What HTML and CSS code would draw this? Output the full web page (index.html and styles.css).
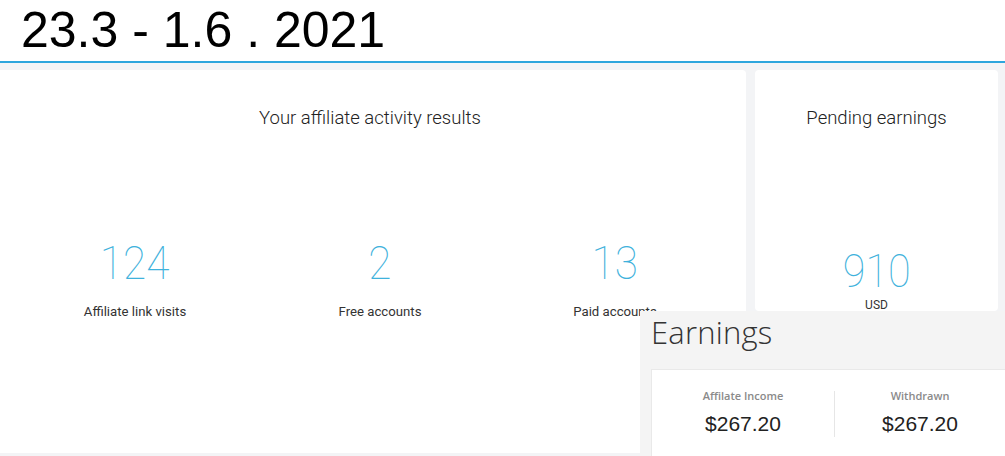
FILE: index.html
```html
<!DOCTYPE html>
<html>
<head>
<meta charset="utf-8">
<link rel="stylesheet" href="styles.css">
</head>
<body>
<header class="date-bar">
  <h1 class="date">23.3 - 1.6 . 2021</h1>
</header>
<main class="dash">
  <section class="card activity">
    <h2 class="card-title">Your affiliate activity results</h2>
    <div class="stats">
      <div class="stat"><div class="num">124</div><div class="label">Affiliate link visits</div></div>
      <div class="stat"><div class="num">2</div><div class="label">Free accounts</div></div>
      <div class="stat"><div class="num">13</div><div class="label">Paid accounts</div></div>
    </div>
  </section>
  <section class="card pending">
    <h2 class="card-title">Pending earnings</h2>
    <div class="stat"><div class="num">910</div><div class="unit">USD</div></div>
  </section>
</main>
<aside class="earnings">
  <h2 class="earn-title">Earnings</h2>
  <div class="earn-card">
    <div class="earn-col first"><div class="earn-label">Affilate Income</div><div class="earn-val">$267.20</div></div>
    <div class="earn-sep"></div>
    <div class="earn-col"><div class="earn-label">Withdrawn</div><div class="earn-val">$267.20</div></div>
  </div>
</aside>
</body>
</html>
```

FILE: styles.css
```css
html, body {
  margin: 0;
  padding: 0;
  width: 1005px;
  height: 456px;
  overflow: hidden;
  background: #f3f4f6;
}
body {
  position: relative;
  font-family: Roboto, "Liberation Sans", sans-serif;
}
.date-bar {
  height: 61px;
  background: #fff;
  border-bottom: 2px solid #2ea6dd;
  box-sizing: content-box;
}
.date {
  margin: 0;
  padding: 4px 0 0 21px;
  font-family: "Liberation Sans", Arial, sans-serif;
  font-weight: 400;
  font-size: 50px;
  line-height: 52px;
  color: #000;
}
.dash {
  display: flex;
  align-items: flex-start;
  gap: 9px;
  padding-top: 7px;
}
.card {
  background: #fff;
  border-radius: 4px;
  box-sizing: border-box;
}
.activity {
  width: 746px;
  height: 383px;
  border-top-left-radius: 0;
  border-bottom-left-radius: 0;
}
.activity .card-title {
  padding-right: 6px;
}
.pending {
  width: 243px;
  height: 241px;
  display: flex;
  flex-direction: column;
  align-items: center;
}
.card-title {
  margin: 0;
  padding-top: 37px;
  font-weight: 300;
  font-size: 18.5px;
  line-height: 22px;
  color: #222;
  text-align: center;
}
.stats {
  display: grid;
  grid-template-columns: 270px 220px 250px;
  margin-top: 109px;
}
.stat {
  display: flex;
  flex-direction: column;
  align-items: center;
}
.num {
  font-weight: 100;
  font-size: 47px;
  line-height: 50px;
  color: #3fb2dc;
  transform: scaleX(0.9);
}
.label {
  margin-top: 16px;
  font-size: 13.2px;
  line-height: 16px;
  color: #333;
}
.pending .stat {
  margin-top: 118px;
}
.pending .num {
  font-size: 46px;
  line-height: 48px;
}
.unit {
  font-size: 12px;
  line-height: 14px;
  color: #333;
  margin-top: 3px;
}
.earnings {
  position: absolute;
  left: 640px;
  top: 311px;
  width: 365px;
  height: 145px;
  background: #f4f4f4;
  padding: 0 0 0 11px;
  box-sizing: border-box;
}
.earn-title {
  margin: 0;
  padding-top: 1px;
  font-family: "Open Sans", sans-serif;
  font-weight: 300;
  font-size: 31px;
  line-height: 40px;
  color: #333;
  letter-spacing: 0.2px;
}
.earn-card {
  margin-top: 17px;
  height: 100px;
  background: #fff;
  border-top: 1px solid #e9e9e9;
  border-left: 1px solid #e9e9e9;
  display: flex;
  align-items: flex-start;
  padding-top: 19px;
  box-sizing: border-box;
}
.earn-col {
  flex: 1;
  display: flex;
  flex-direction: column;
  align-items: center;
}
.earn-col.first {
  flex: 0 0 182px;
}
.earn-sep {
  width: 1px;
  height: 46px;
  background: #e6e6e6;
  margin-top: 2px;
}
.earn-label {
  font-family: "Open Sans", sans-serif;
  font-weight: 600;
  font-size: 11px;
  line-height: 14px;
  color: #8a8a8a;
}
.earn-val {
  margin-top: 9px;
  font-family: "Liberation Sans", Arial, sans-serif;
  font-size: 21px;
  line-height: 24px;
  color: #222;
}
```
